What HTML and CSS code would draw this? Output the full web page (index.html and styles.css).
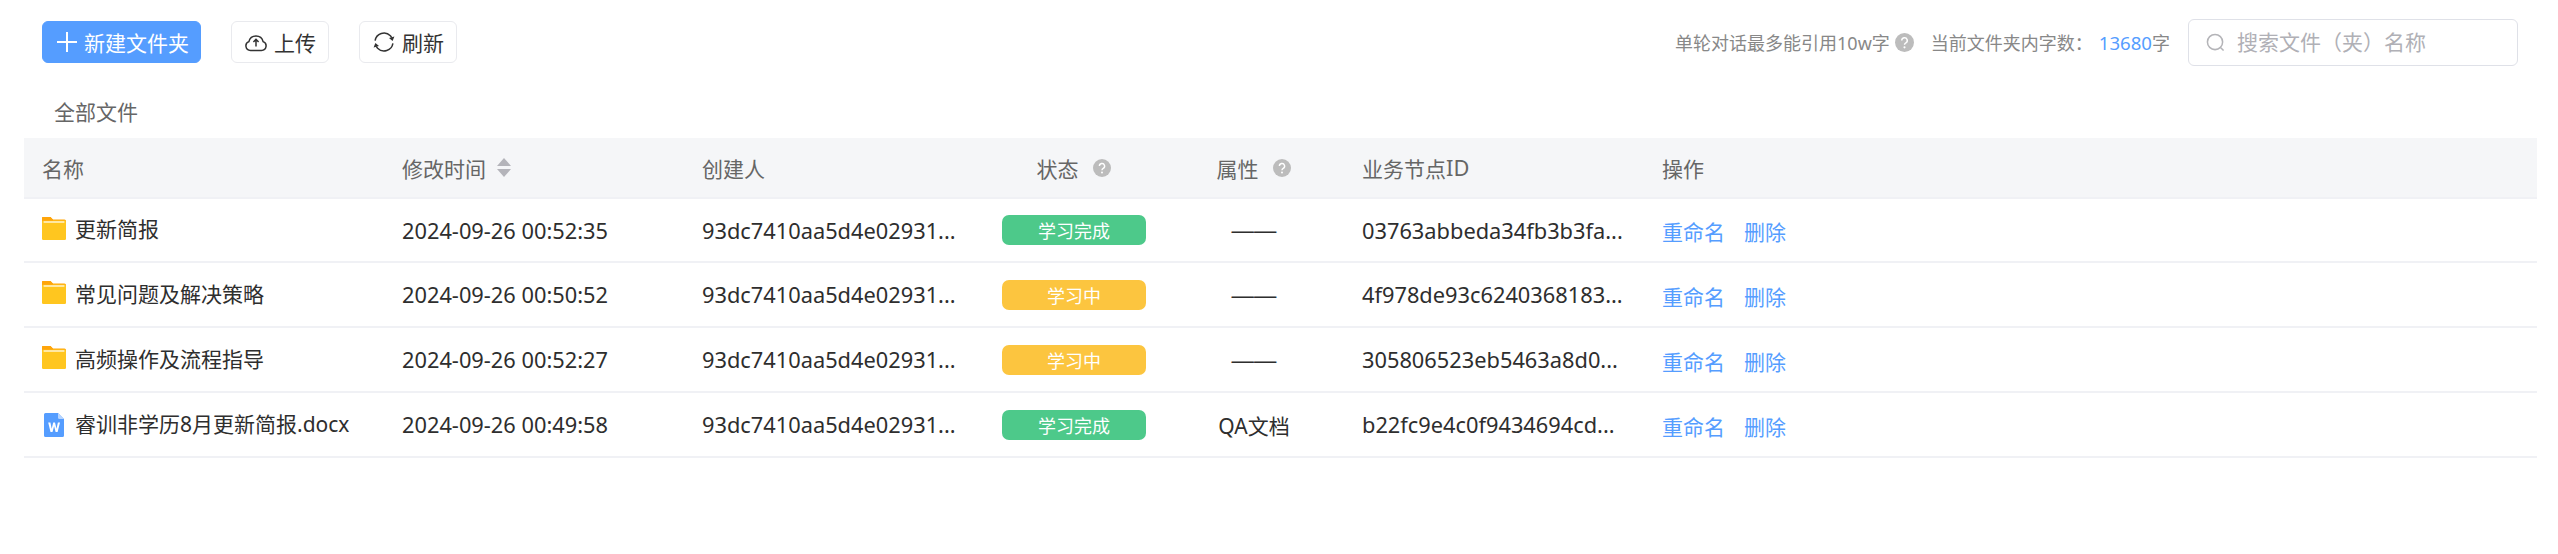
FILE: index.html
```html
<!DOCTYPE html>
<html lang="zh-CN">
<head>
<meta charset="utf-8">
<title>文件列表</title>
<link rel="stylesheet" href="styles.css">
</head>
<body>
<svg class="defs" width="0" height="0" aria-hidden="true">
  <defs>
    <symbol id="folder" viewBox="0 0 24 23">
      <path d="M1 0h7.5l2.6 2.6H22.5a1.5 1.5 0 0 1 1.5 1.5V6H0V1a1 1 0 0 1 1-1z" fill="#ffa50a"/>
      <rect x="0" y="3.4" width="24" height="19.6" rx="1.2" fill="#ffc61f"/>
      <rect x="1.6" y="4.2" width="20.8" height="1.6" fill="#fff0c4"/>
      <path d="M0 1a1 1 0 0 1 1-1h7.5l2.6 3.4H0z" fill="#ffa50a"/>
    </symbol>
    <symbol id="help" viewBox="0 0 18 18">
      <circle cx="9" cy="9" r="9" fill="#bcbcbc"/>
      <path d="M6.4 7.1a2.6 2.6 0 1 1 3.9 2.2c-.9.5-1.3 1-1.3 1.9" fill="none" stroke="#fff" stroke-width="1.4"/>
      <circle cx="9" cy="13.6" r="1" fill="#fff"/>
    </symbol>
  </defs>
</svg>

<header class="toolbar">
  <div class="actions">
    <button class="btn btn-primary" type="button">
      <svg class="icon-plus" viewBox="0 0 20 20"><path d="M10 0v20M0 10h20" stroke="#fff" stroke-width="2" fill="none"/></svg>
      <span>新建文件夹</span>
    </button>
    <button class="btn" type="button">
      <svg class="icon-btn" viewBox="0 0 22 22" fill="none" stroke="#333" stroke-width="1.5"><path d="M5.5 19.5a4.6 4.6 0 0 1-1.6-8.9 7.3 7.3 0 0 1 14.2 0 4.6 4.6 0 0 1-1.6 8.9z"/><path d="M11 15.5V8.5M8.4 11 11 8.4l2.6 2.6"/></svg>
      <span>上传</span>
    </button>
    <button class="btn" type="button">
      <svg class="icon-btn" viewBox="0 0 22 22" fill="none" stroke="#333" stroke-width="1.5"><path d="M2.1 9.6A9 9 0 0 1 17.4 4.7l1.4 1.9"/><path d="M19.9 12.4A9 9 0 0 1 4.6 17.3l-1.4-1.9"/><path d="M21.4 5.4 19.6 10l-3.6-2.9z" fill="#333" stroke="none"/><path d="M.6 16.6 2.4 12 6 14.9z" fill="#333" stroke="none"/></svg>
      <span>刷新</span>
    </button>
  </div>
  <div class="meta">
    <span class="hint">单轮对话最多能引用10w字</span>
    <svg class="help help-top"><use href="#help"/></svg>
    <span class="hint count">当前文件夹内字数：</span>
    <span class="hint total"><span class="num">13680</span>字</span>
    <label class="search">
      <svg class="icon-search" viewBox="0 0 20 20" fill="none" stroke="#b4b4b8" stroke-width="1.6"><circle cx="9.5" cy="9.5" r="8"/><path d="m15.5 15.5 3 3"/></svg>
      <input class="search-input" type="text" placeholder="搜索文件（夹）名称">
    </label>
  </div>
</header>

<nav class="crumb">全部文件</nav>

<section class="table">
  <div class="row head">
    <div class="cell">名称</div>
    <div class="cell">修改时间<span class="sort"><i class="up"></i><i class="down"></i></span></div>
    <div class="cell">创建人</div>
    <div class="cell center">状态<svg class="help"><use href="#help"/></svg></div>
    <div class="cell center">属性<svg class="help"><use href="#help"/></svg></div>
    <div class="cell">业务节点<span class="latin-head">ID</span></div>
    <div class="cell">操作</div>
  </div>

  <div class="row">
    <div class="cell name"><svg class="file-icon"><use href="#folder"/></svg><span>更新简报</span></div>
    <div class="cell latin">2024-09-26 00:52:35</div>
    <div class="cell latin">93dc7410aa5d4e02931...</div>
    <div class="cell center"><span class="pill done">学习完成</span></div>
    <div class="cell center dash">——</div>
    <div class="cell latin">03763abbeda34fb3b3fa...</div>
    <div class="cell ops"><a>重命名</a><a>删除</a></div>
  </div>

  <div class="row">
    <div class="cell name"><svg class="file-icon"><use href="#folder"/></svg><span>常见问题及解决策略</span></div>
    <div class="cell latin">2024-09-26 00:50:52</div>
    <div class="cell latin">93dc7410aa5d4e02931...</div>
    <div class="cell center"><span class="pill learning">学习中</span></div>
    <div class="cell center dash">——</div>
    <div class="cell latin">4f978de93c6240368183...</div>
    <div class="cell ops"><a>重命名</a><a>删除</a></div>
  </div>

  <div class="row">
    <div class="cell name"><svg class="file-icon"><use href="#folder"/></svg><span>高频操作及流程指导</span></div>
    <div class="cell latin">2024-09-26 00:52:27</div>
    <div class="cell latin">93dc7410aa5d4e02931...</div>
    <div class="cell center"><span class="pill learning">学习中</span></div>
    <div class="cell center dash">——</div>
    <div class="cell latin">305806523eb5463a8d0...</div>
    <div class="cell ops"><a>重命名</a><a>删除</a></div>
  </div>

  <div class="row">
    <div class="cell name">
      <svg class="doc-icon" viewBox="0 0 20 24"><path d="M1.5 0H14l6 6v16.5a1.5 1.5 0 0 1-1.5 1.5h-17A1.5 1.5 0 0 1 0 22.5v-21A1.5 1.5 0 0 1 1.5 0z" fill="#559dff"/><path d="M14 0l6 6h-4.5A1.5 1.5 0 0 1 14 4.5z" fill="#b7d5ff"/><path d="M4.2 9.5h2.2l1.3 6.2 1.5-6.2h1.8l1.5 6.2 1.4-6.2h2.1l-2.4 9.5h-2l-1.5-5.8L8.5 19h-2z" fill="#fff"/></svg>
      <span>睿训非学历8月更新简报.docx</span>
    </div>
    <div class="cell latin">2024-09-26 00:49:58</div>
    <div class="cell latin">93dc7410aa5d4e02931...</div>
    <div class="cell center"><span class="pill done">学习完成</span></div>
    <div class="cell center">QA文档</div>
    <div class="cell latin">b22fc9e4c0f9434694cd...</div>
    <div class="cell ops"><a>重命名</a><a>删除</a></div>
  </div>
</section>
</body>
</html>
```
FILE: styles.css
```css
* { box-sizing: border-box; }
html, body { margin: 0; padding: 0; background: #fff; }
body {
  padding: 0 21px 0 24px;
  font-family: "Noto Sans", "Noto Sans CJK SC", sans-serif;
  font-size: 21px;
  color: #2e2e2e;
  height: 554px;
  overflow: hidden;
}
.defs { display: block; height: 0; }

.toolbar {
  display: flex;
  align-items: center;
  justify-content: space-between;
  padding: 18px 19px 0 18px;
  height: 66px;
}
.actions { display: flex; gap: 30px; }
.btn {
  display: flex;
  align-items: center;
  gap: 7px;
  height: 42px;
  padding: 0 12px 0 13px;
  border: 1px solid #e9eaee;
  border-radius: 6px;
  background: #fff;
  color: #333;
  font: inherit;
  white-space: nowrap;
}
.btn-primary {
  gap: 7px;
  padding: 0 11px 0 14px;
  background: #559dff;
  border-color: #559dff;
  color: #fff;
}
.icon-plus { width: 20px; height: 20px; }
.icon-btn { width: 22px; height: 22px; }

.meta { display: flex; align-items: center; }
.hint { font-size: 18px; color: #888; white-space: nowrap; }
.count { margin-left: 17px; }
.total { margin-left: 6px; }
.num { color: #559dff; font-size: 18.6px; }
.help { width: 18px; height: 18px; margin-left: 14px; flex: none; }
.help-top { width: 19px; height: 19px; margin-left: 5px; }
.search {
  display: flex;
  align-items: center;
  gap: 12px;
  width: 330px;
  height: 47px;
  margin-left: 18px;
  padding: 0 15px 0 17px;
  border: 1.5px solid #dfe1e8;
  border-radius: 6px;
}
.icon-search { width: 19px; height: 19px; flex: none; }
.search-input {
  flex: 1;
  min-width: 0;
  border: 0;
  outline: 0;
  padding: 0;
  font: inherit;
  color: #333;
  background: transparent;
}
.search-input::placeholder { color: #b0b0b6; opacity: 1; }

.crumb {
  padding: 28px 0 8px 30px;
  line-height: 36px;
  color: #666;
}

.row {
  display: grid;
  grid-template-columns: 360px 300px 300px 180px 180px 300px 1fr;
  height: 65px;
  border-bottom: 2px solid #f0f1f5;
}
.head {
  height: 61px;
  background: #f5f6f8;
  color: #666;
}
.head + .row { height: 64px; }
.head .center { padding-right: 1px; }
.cell {
  display: flex;
  align-items: center;
  padding-left: 18px;
  white-space: nowrap;
  min-width: 0;
}
.center { justify-content: center; padding-left: 0; }
.latin { font-size: 21.8px; }
.latin-head { font-size: 21.8px; }
.dash {
  font-family: "Liberation Sans", sans-serif;
  font-size: 22.4px;
  padding-top: 2px;
}

.sort { display: inline-flex; flex-direction: column; gap: 3px; margin-left: 11px; }
.sort i { display: block; width: 0; height: 0; border-left: 7px solid transparent; border-right: 7px solid transparent; }
.sort .up { border-bottom: 8px solid #b4b4ba; }
.sort .down { border-top: 8px solid #b4b4ba; }

.name { gap: 9px; }
.file-icon { width: 24px; height: 23px; flex: none; margin-bottom: 4px; }
.doc-icon { width: 20px; height: 24px; flex: none; margin: 0 2px 0 2px; }
.name span { margin-bottom: 4px; }

.pill {
  display: flex;
  align-items: center;
  justify-content: center;
  width: 144px;
  height: 30px;
  border-radius: 7px;
  color: #fff;
  font-size: 18px;
}
.done { background: #4dc98a; }
.learning { background: #fcc53f; }

.ops { gap: 19px; padding-top: 2px; }
.ops a { color: #559dff; }
```
